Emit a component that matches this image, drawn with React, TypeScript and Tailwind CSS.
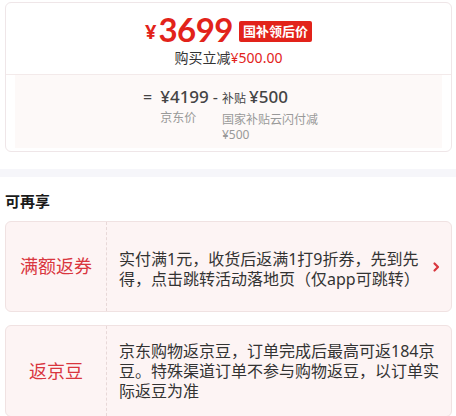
export default function App() {
  return (
    <div
      className="w-[456px] h-[416px] overflow-hidden bg-white pt-[2px] text-[#333]"
      style={{ fontFamily: '"Noto Sans", "Noto Sans CJK SC", sans-serif' }}
    >
      {/* Price card */}
      <div className="ml-[5px] mr-[4px] rounded-[6px] border border-[#efe6e8] overflow-hidden">
        <div className="h-[71px] flex flex-col items-center pt-[9px]">
          <div className="flex items-center h-[34px]">
            <span className="text-[#e2231a] text-[20px] font-bold leading-none mt-[6px] mr-[2px]">¥</span>
            <span className="text-[#e2231a] text-[33px] font-bold leading-none tracking-[-0.5px]" style={{ fontFamily: 'Lato, "Noto Sans", sans-serif' }}>3699</span>
            <span className="ml-[6px] mt-[4px] h-[21px] px-[4px] rounded-[2px] bg-[#e2231a] text-white text-[13px] font-bold leading-[21px]">国补领后价</span>
          </div>
          <div className="mt-[3px] text-[14px] leading-[18px] text-[#333]">
            购买立减<span className="text-[#e2231a]">¥500.00</span>
          </div>
        </div>
        <div className="h-px bg-[#f3eaea]" />
        <div className="bg-[#fdf9f8] mx-[9px] mb-[3px] h-[73px] flex justify-center pt-[10px]">
          <div className="flex items-start ml-[8px]">
            <span className="text-[16px] leading-[24px] text-[#444] mr-[8px]">=</span>
            <div className="flex flex-col">
              <span className="text-[17px] leading-[24px] text-[#444] font-medium">¥4199</span>
              <span className="text-[12px] leading-[15px] text-[#999] mt-[1px]">京东价</span>
            </div>
            <span className="text-[16px] leading-[24px] text-[#444] mx-[4px]">-</span>
            <div className="flex flex-col w-[100px]">
              <span className="leading-[24px] text-[#444]">
                <span className="text-[12px]">补贴</span>
                <span className="text-[17px] font-medium ml-[3px]">¥500</span>
              </span>
              <span className="text-[12px] leading-[15px] text-[#999] mt-[1px]">国家补贴云闪付减¥500</span>
            </div>
          </div>
        </div>
      </div>

      <div className="mt-[17px] h-[8px] bg-[#f6f6fa]" />

      <div className="mt-[14px] ml-[5px] text-[15px] font-bold leading-[20px] text-[#1a1a1a]">可再享</div>

      {/* Extra benefit cards */}
      <div className="mt-[10px] ml-[5px] mr-[4px] flex flex-col gap-[13px]">
        <div className="h-[91px] flex rounded-[6px] border border-[#f0e2e2] bg-[#fdf4f4]">
          <div className="w-[101px] shrink-0 flex items-center justify-center border-r border-dashed border-[#e8d8d8] text-[#d9363e] text-[18px]">
            满额返券
          </div>
          <div className="flex-1 flex items-center pl-[12px] pr-[10px]">
            <p className="flex-1 text-[16px] leading-[20px] text-[#333] mt-[4px]">
              实付满1元，收货后返满1打9折券，先到先得，点击跳转活动落地页（仅app可跳转）
            </p>
            <svg width="10" height="12" viewBox="0 0 10 12" className="ml-[6px] shrink-0">
              <path d="M3.5 2.5 L7 6 L3.5 9.5" fill="none" stroke="#d9363e" strokeWidth="2.2" strokeLinecap="round" strokeLinejoin="round" />
            </svg>
          </div>
        </div>
        <div className="h-[92px] flex rounded-[6px] border border-[#f0e2e2] bg-[#fdf4f4]">
          <div className="w-[101px] shrink-0 flex items-center justify-center border-r border-dashed border-[#e8d8d8] text-[#d9363e] text-[18px]">
            返京豆
          </div>
          <div className="flex-1 flex items-center pl-[12px] pr-[10px]">
            <p className="text-[16px] leading-[20px] text-[#333]">
              京东购物返京豆，订单完成后最高可返184京豆。特殊渠道订单不参与购物返豆，以订单实际返豆为准
            </p>
          </div>
        </div>
      </div>
    </div>
  );
}
